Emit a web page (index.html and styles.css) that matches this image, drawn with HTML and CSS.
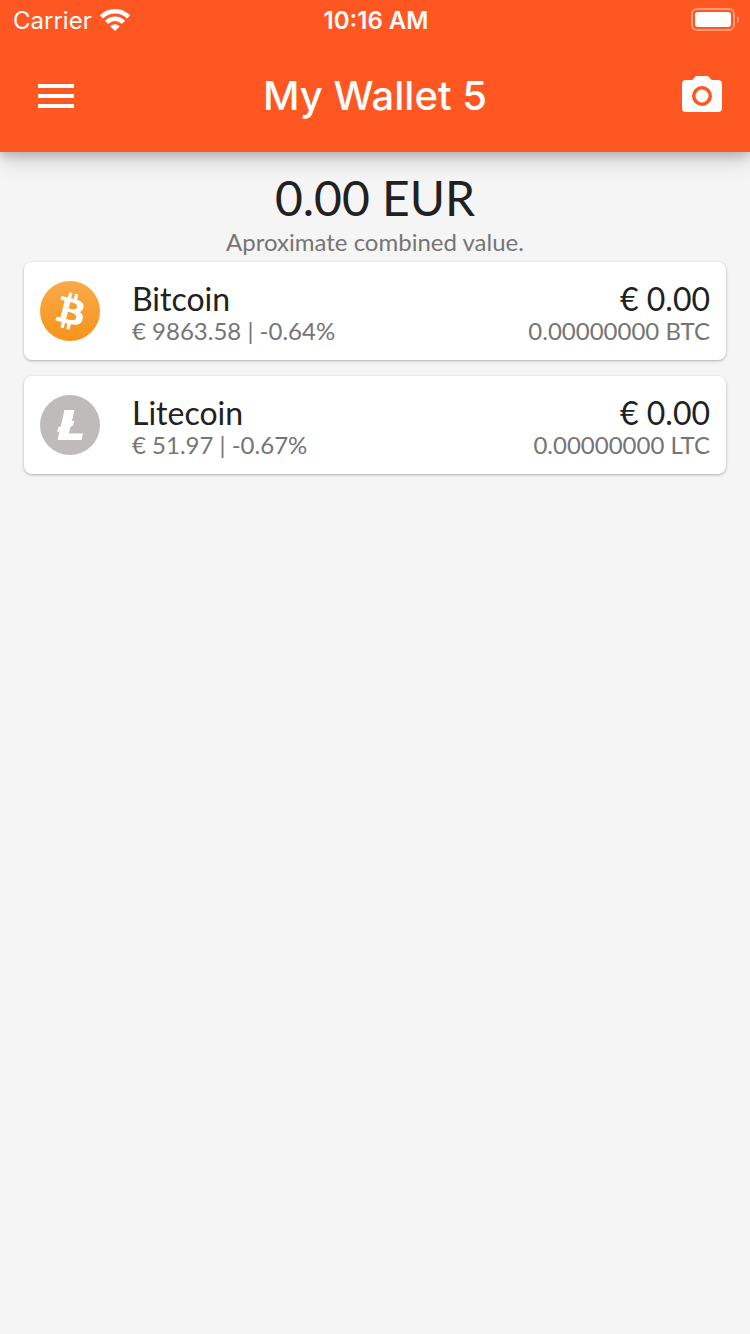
FILE: index.html
```html
<!DOCTYPE html>
<html lang="en">
<head>
<meta charset="utf-8">
<meta name="viewport" content="width=device-width, initial-scale=1">
<title>My Wallet 5</title>
<link rel="stylesheet" href="styles.css">
</head>
<body>
<header class="header">
  <div class="status">
    <div class="carrier">
      <span>Carrier</span>
      <svg width="30" height="24" viewBox="0 0 30 24" fill="#fff" aria-hidden="true">
        <path d="M15 0C9.300 0 4 2.200.1 6.100q-.3.300 0 .6l2.600 2.600q.3.300.6 0a16.600 16.600 0 0 1 23.400 0q.3.300.6 0l2.600-2.600q.3-.3 0-.6A21 21 0 0 0 15 0z"/>
        <path d="M15 7.600a14 14 0 0 0-9.700 4q-.3.300 0 .6l2.600 2.500q.3.300.6 0a9.400 9.400 0 0 1 13 0q.3.300.6 0l2.600-2.500q.3-.3 0-.6a14 14 0 0 0-9.700-4z"/>
        <path d="M15 15.200a6.500 6.500 0 0 0-4.500 1.800q-.3.300 0 .6l4.200 4.200q.3.300.6 0l4.200-4.200q.3-.3 0-.6A6.500 6.500 0 0 0 15 15.200z"/>
      </svg>
    </div>
    <time class="clock">10:16 AM</time>
    <svg class="battery" width="48" height="26" viewBox="0 0 48 26" aria-hidden="true">
      <rect x="1" y="1" width="42" height="21" rx="5" fill="none" stroke="#fff" stroke-opacity=".4" stroke-width="2"/>
      <rect x="4" y="4" width="36" height="15" rx="3" fill="#fff"/>
      <path d="M46 8q2 1 2 3.500T46 15z" fill="#fff" fill-opacity=".5"/>
    </svg>
  </div>
  <div class="toolbar">
    <button class="icon-button" type="button" aria-label="Menu">
      <svg width="48" height="48" viewBox="0 0 24 24" fill="#fff"><path d="M3 18h18v-2H3v2zm0-5h18v-2H3v2zm0-7v2h18V6H3z"/></svg>
    </button>
    <h1 class="title">My Wallet 5</h1>
    <button class="icon-button scan" type="button" aria-label="Scan">
      <svg width="48" height="48" viewBox="0 0 48 48" fill="#fff">
        <path fill-rule="evenodd" d="M18 4L14.300 8H8a4 4 0 0 0-4 4v24a4 4 0 0 0 4 4h32a4 4 0 0 0 4-4V12a4 4 0 0 0-4-4h-6.300L30 4zM24 14a10 10 0 1 0 0 20a10 10 0 1 0 0-20z"/>
        <circle cx="24" cy="24" r="6.500"/>
      </svg>
    </button>
  </div>
</header>
<main class="content">
  <section class="summary">
    <h2 class="total">0.00 EUR</h2>
    <p class="muted">Aproximate combined value.</p>
  </section>
  <ul class="coins">
    <li class="card">
      <svg class="coin" width="60" height="60" viewBox="0 0 32 32" aria-hidden="true">
        <defs><linearGradient id="btc" x2="0" y2="1"><stop stop-color="#f9aa4b"/><stop offset="1" stop-color="#f7931a"/></linearGradient></defs>
        <circle cx="16" cy="16" r="16" fill="url(#btc)"/>
        <path fill="#fff" d="M23.189 14.020c.314-2.096-1.283-3.223-3.465-3.975l.708-2.840-1.728-.43-.69 2.765c-.454-.114-.92-.22-1.385-.326l.695-2.783L15.596 6l-.708 2.839c-.376-.086-.746-.17-1.104-.26l.002-.009-2.384-.595-.46 1.846s1.283.294 1.256.312c.7.175.826.638.805 1.006l-.806 3.235c.048.012.11.030.18.057l-.183-.045-1.130 4.532c-.086.212-.303.531-.793.410.018.025-1.256-.313-1.256-.313l-.858 1.978 2.250.561c.418.105.828.215 1.231.318l-.715 2.872 1.727.430.708-2.840c.472.127.930.245 1.378.357l-.706 2.828 1.728.430.715-2.866c2.948.558 5.164.333 6.097-2.333.752-2.146-.037-3.385-1.588-4.192 1.130-.260 1.980-1.003 2.207-2.538zm-3.950 5.538c-.533 2.147-4.148.986-5.320.695l.950-3.805c1.172.293 4.929.872 4.370 3.110zm.535-5.569c-.487 1.953-3.495.960-4.470.717l.860-3.450c.975.243 4.118.696 3.610 2.733z"/>
      </svg>
      <div class="info">
        <h3 class="name">Bitcoin</h3>
        <p class="muted">€ 9863.58 | -0.64%</p>
      </div>
      <div class="balance">
        <p class="name">€ 0.00</p>
        <p class="muted">0.00000000 BTC</p>
      </div>
    </li>
    <li class="card">
      <svg class="coin" width="60" height="60" viewBox="0 0 60 60" aria-hidden="true">
        <circle cx="30" cy="30" r="30" fill="#bfbbbb"/>
        <path fill="#fff" d="M24.500 15h10l-2.700 11.500 2.500-1-1.200 5-2.600 1.200L28.900 38.500H43L41.500 45H17.500l2-8.500-2.500 1 1.200-5 2.600-1.200z"/>
      </svg>
      <div class="info">
        <h3 class="name">Litecoin</h3>
        <p class="muted">€ 51.97 | -0.67%</p>
      </div>
      <div class="balance">
        <p class="name">€ 0.00</p>
        <p class="muted">0.00000000 LTC</p>
      </div>
    </li>
  </ul>
</main>
</body>
</html>
```
FILE: styles.css
```css
* {
  box-sizing: border-box;
  margin: 0;
  padding: 0;
}

body {
  min-height: 100vh;
  background: #f5f5f5;
  color: #212121;
  font-family: Lato, "Liberation Sans", sans-serif;
}

.header {
  background: #ff5722;
  color: #fff;
  font-family: Inter, "Liberation Sans", sans-serif;
  box-shadow: 0 4px 8px rgba(0, 0, 0, .14), 0 8px 20px rgba(0, 0, 0, .18);
}

.status {
  display: grid;
  grid-template-columns: 1fr auto 1fr;
  align-items: center;
  height: 40px;
  padding: 0 11px 0 13px;
  font-size: 24px;
  line-height: 42px;
}

.carrier {
  display: flex;
  align-items: center;
  gap: 8px;
}

.clock {
  font-weight: 600;
}

.battery {
  justify-self: end;
}

.toolbar {
  display: grid;
  grid-template-columns: 1fr auto 1fr;
  align-items: center;
  height: 112px;
  padding: 0 24px;
}

.icon-button {
  display: flex;
  justify-self: start;
  padding: 0 8px;
  border: 0;
  background: none;
  cursor: pointer;
}

.scan {
  justify-self: end;
  padding: 0;
}

.title {
  font-size: 40px;
  font-weight: 500;
  line-height: 48px;
}

.content {
  padding: 16px 24px;
}

.summary {
  padding-bottom: 8px;
  text-align: center;
}

.total {
  padding-bottom: 2px;
  font-size: 48px;
  font-weight: 400;
  line-height: 60px;
}

.muted {
  color: #757575;
  font-size: 24px;
  line-height: 24px;
}

.coins {
  display: grid;
  gap: 16px;
  list-style: none;
}

.card {
  display: flex;
  align-items: center;
  gap: 32px;
  padding: 17px 16px;
  border-radius: 8px;
  background: #fff;
  box-shadow: 0 1px 3px rgba(0, 0, 0, .3);
}

.info {
  flex: 1;
}

.balance {
  text-align: right;
}

.name {
  font-size: 32px;
  font-weight: 400;
  line-height: 40px;
}
```
